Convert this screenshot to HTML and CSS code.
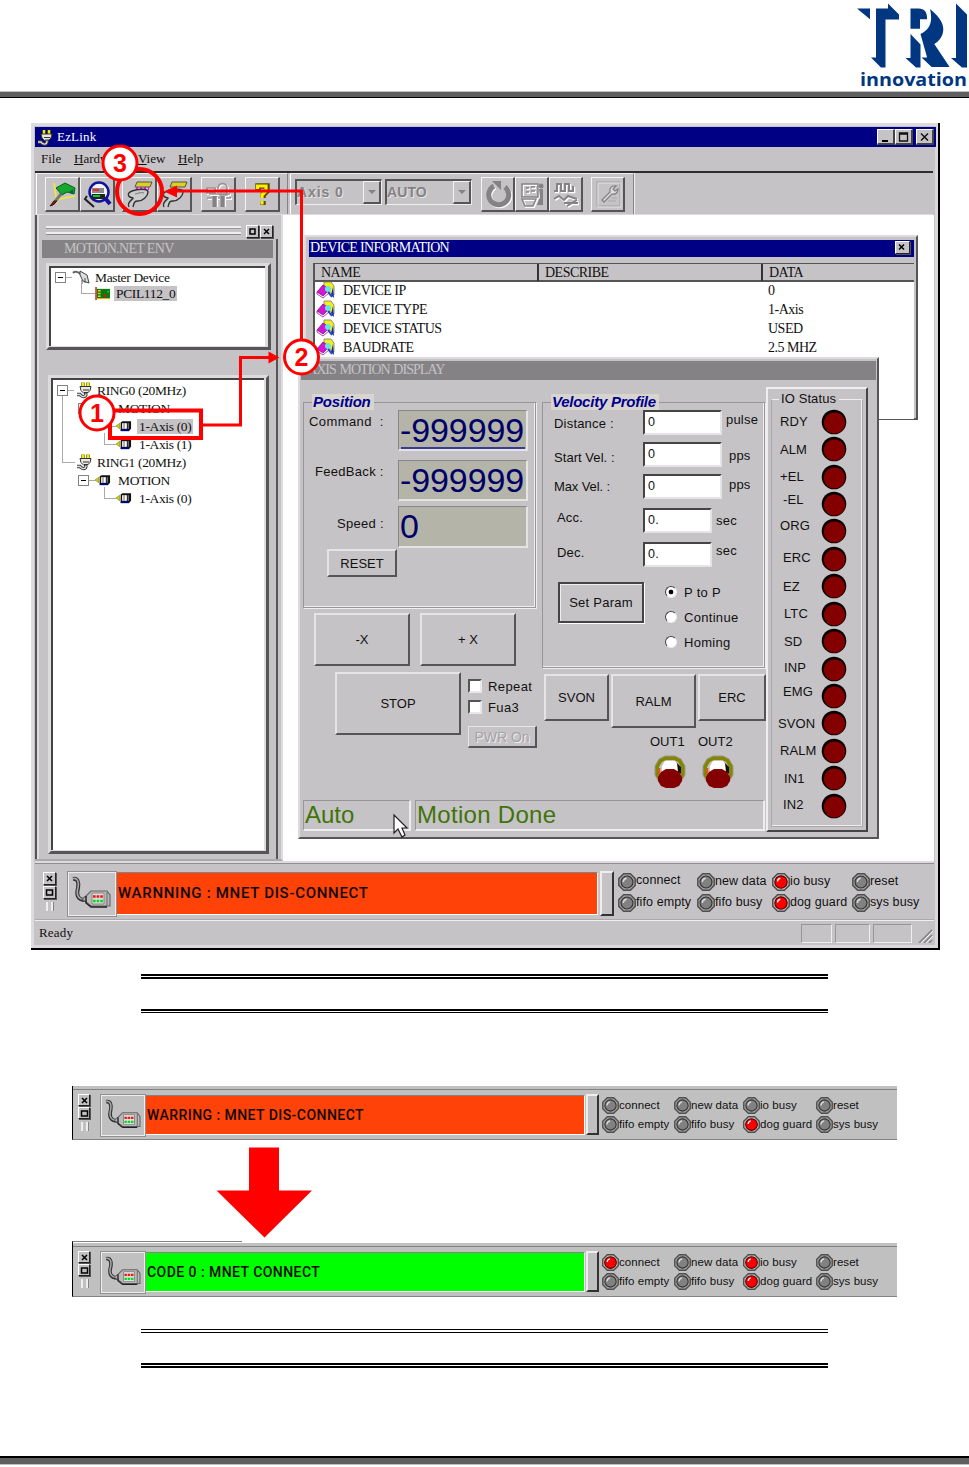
FILE: index.html
```html
<!DOCTYPE html>
<html lang="en">
<head>
<meta charset="utf-8">
<title>EzLink</title>
<link rel="stylesheet" href="styles.css">
</head>
<body>
<svg class="sprite" width="0" height="0" aria-hidden="true">
  <symbol id="plug" viewBox="0 0 17 17">
    <path d="M7 1v4M12 1v4" stroke="#6b6b00" stroke-width="3.4"/><path d="M7 1v4M12 1v4" stroke="#f4ee00" stroke-width="2"/>
    <path d="M4 5h11l-1 4-3 3H8L5 9z" fill="#e8e8e0" stroke="#333" stroke-width="1"/>
    <path d="M7 8.5h6M8 11h4" stroke="#333"/>
    <path d="M10 12c0 5-5 3-6 1H1" fill="none" stroke="#444" stroke-width="3.4"/><path d="M10 12c0 5-5 3-6 1H1" fill="none" stroke="#ddd" stroke-width="1.4"/>
  </symbol>
  <symbol id="motor" viewBox="0 0 17 12">
    <path d="M0 6l4-3v6z" fill="#d8d000" stroke="#777700" stroke-width=".6"/>
    <path d="M5 2l2-1h9v8l-2 2H5z" fill="#111"/><path d="M6.500 3h5v6h-5z" fill="#fff"/><path d="M8.500 3v6" stroke="#555"/>
    <path d="M5 10.500h9" stroke="#000084" stroke-width="2"/><path d="M13 3v6" stroke="#999"/>
  </symbol>
  <symbol id="board" viewBox="0 0 17 14">
    <path d="M1 0v14" stroke="#c01010" stroke-width="1.500"/><path d="M2 2h14v10H2z" fill="#087a10"/>
    <path d="M3 4h3M3 7h3M3 10h3" stroke="#e8d000" stroke-width="1.500"/><path d="M9 8h3v3H9z" fill="#c02020"/><path d="M13 4h2v2h-2z" fill="#20c020"/><path d="M2 12.500h14" stroke="#e8a000"/>
  </symbol>
  <symbol id="cable" viewBox="0 0 42 36">
    <path d="M2 3c5-1 6 4 5 9-2 7 0 12 7 12" fill="none" stroke="#333" stroke-width="4"/>
    <path d="M2 2.500c5-1 6 4 5 9-2 7 0 12 7 12" fill="none" stroke="#a9a9a9" stroke-width="1.600"/>
    <path d="M11 23l4-3 5-5h16l3 4v11H20l-5-4z" fill="#b9b9b9" stroke="#666" stroke-width="1.200"/>
    <path d="M15 20v7l5 4h16" fill="none" stroke="#222" stroke-width="1.500"/>
    <path d="M21 17h12v11H21z" fill="#ddd" stroke="#888"/>
    <path d="M22 20.500h10" stroke="#f01818" stroke-width="2.500" stroke-dasharray="2.700 .9"/><path d="M22 25h10" stroke="#08dc20" stroke-width="2.500" stroke-dasharray="2.700 .9"/>
    <path d="M36 16v14" stroke="#666"/>
  </symbol>
  <symbol id="led-off" viewBox="0 0 16 16">
    <path d="M5 .7h6L15.300 5v6L11 15.300H5L.7 11V5z" fill="#a2a2a2" stroke="#505050" stroke-width="1.300"/>
    <circle cx="8" cy="8" r="5.300" fill="#818181" stroke="#333"/><path d="M4.700 8a3.500 3.500 0 013-3.300" fill="none" stroke="#ddd" stroke-width="1.200"/>
  </symbol>
  <symbol id="led-on" viewBox="0 0 16 16">
    <path d="M5 .7h6L15.300 5v6L11 15.300H5L.7 11V5z" fill="#c6c6c6" stroke="#4c4c4c" stroke-width="1.300"/>
    <circle cx="8" cy="8" r="5.500" fill="#fb0000" stroke="#500"/><path d="M4.900 7.500a3 3 0 012.500-2.800" fill="none" stroke="#fff" stroke-width="1.200"/>
  </symbol>
  <symbol id="book" viewBox="0 0 18 18">
    <path d="M7 1h7l3 4v9l-5-3-5-3z" fill="#f5ee1a" stroke="#777" stroke-width=".8"/>
    <path d="M16 6l1 11-3-3z" fill="#1830a0"/>
    <path d="M0 11l6-7 6 4-6 8z" fill="#d614d6" stroke="#6d086d" stroke-width=".7"/><path d="M0 11l6 4 6-6v3l-6 5-6-4z" fill="#fff" stroke="#808" stroke-width=".7"/>
    <circle cx="11" cy="8" r="3" fill="#5fe6ea"/><path d="M11 11l4 5" stroke="#24c" stroke-width="2"/>
  </symbol>
  <symbol id="lamp" viewBox="0 0 26 26">
    <circle cx="13" cy="13" r="12.300" fill="#080000"/><circle cx="13.500" cy="14" r="10.600" fill="#840000"/>
  </symbol>
  <symbol id="switch" viewBox="0 0 32 34">
    <path d="M11 1h10l6 3 4 7v9l-4 7H5l-4-7v-9l4-7z" fill="#858500" stroke="#999" stroke-width="1"/>
    <path d="M5 12l3-5 4-2h8l4 2 3 5v9H5z" fill="#c6c3c6"/>
    <path d="M11 6h10l3 5v6H8v-6z" fill="#fff"/><path d="M23 8l4 4v7l-3-2z" fill="#111"/><path d="M5.500 13v7" stroke="#f42" stroke-width="1.500"/>
    <path d="M12 14h8l5 3 3 5v4l-3 5-5 2h-8l-5-2-3-5v-4l3-5z" fill="#840000"/>
  </symbol>
</svg>

<header class="page-head">
  <svg class="logo" width="112" height="86" viewBox="857 2 112 86">
    <g fill="#003780">
      <path d="M857 8.600h13v10.700z"/>
      <path d="M876 8.600h12V3.500l11 11v5h-13.500V67.500H881L871 57.500h5z"/>
      <path d="M910.500 8.600h8c6 0 9 4 8.500 10.600H920v9.500h-9.500z"/>
      <path d="M910.500 34l10 10.500v23H916l-10.500-9.500h5z"/>
      <path d="M930 9c7 6 13 12 13.300 20 0 7-4 12-9 15l15.300 23h-18l-10-9.500h5.500L920.500 34c8-4 13-10 9.500-25z"/>
      <path d="M956 3.500l11 11v53h-5l-11-9.500h5z"/>
    </g>
    <text class="logo-text" x="860" y="86" textLength="107" lengthAdjust="spacingAndGlyphs">innovation</text>
  </svg>
</header>

<main class="app">
  <div class="titlebar">
    <svg width="17" height="17"><use href="#plug"/></svg><span class="app-name">EzLink</span>
    <i class="cap"><svg width="15" height="14"><path d="M4 11h6" stroke="#000" stroke-width="2"/></svg></i><i class="cap"><svg width="15" height="14"><path d="M3.500 3h8v8h-8zM3.500 4h8" fill="none" stroke="#111" stroke-width="1.300"/></svg></i><i class="cap cap-close"><svg width="15" height="14"><path d="M4 3.500l7 7M11 3.500l-7 7" stroke="#111" stroke-width="1.500"/></svg></i>
  </div>
  <nav class="menu"><span class="m1">File</span><span class="m2"><u>H</u>ardware</span><span class="m3"><u>V</u>iew</span><span class="m4"><u>H</u>elp</span></nav>

  <div class="toolbar">
    <div class="tb-group tb-main">
      <button class="tool"><svg width="30" height="29" viewBox="0 0 30 29"><path d="M6 3l3 20M27 16L6 20" stroke="#f5ed25" stroke-width="1.500"/><path d="M8 8l9-5 10 5-1 6-7-2-5 3z" fill="#16a82c" stroke="#075c16"/><path d="M25 9v5l-4-2z" fill="#064"/><path d="M13 14l-8 10" stroke="#777" stroke-width="3"/><path d="M6 21l-4 5 3-1 4-4z" fill="#842020" stroke="#411"/></svg></button><button class="tool"><svg width="30" height="29" viewBox="0 0 30 29"><path d="M4 16l-2 3 9 8" fill="none" stroke="#222" stroke-width="2"/><circle cx="16" cy="12" r="9.500" fill="#f4f4f4" stroke="#11119c" stroke-width="2.500"/><path d="M9 8h12v5H9z" fill="#888"/><path d="M10 10h6" stroke="#f22" stroke-width="2"/><path d="M9 14h13v5H9z" fill="#222"/><path d="M10 16h7" stroke="#0c3" stroke-width="2"/><path d="M22 18l5 6" stroke="#11119c" stroke-width="4"/></svg></button>
      <button class="tool gap-a"><svg width="30" height="29" viewBox="0 0 30 29"><path d="M12 2h15l-2 5H10z" fill="#d8d022" stroke="#554"/><path d="M11 8.500h13" stroke="#f0f" stroke-width="3" stroke-dasharray="2 2"/><path d="M4 27c-3-5 5-8 4-9-6-1-6-5-1-7 5-2 16-3 16 1s-5 9-10 9c-4 0-4 2-5 6" fill="#ccc" stroke="#333" stroke-width="1.400"/><path d="M10 14c4-1 7-2 9-1" stroke="#777" fill="none"/></svg></button><button class="tool"><svg width="30" height="29" viewBox="0 0 30 29"><path d="M12 2h15l-2 5H10z" fill="#d8d022" stroke="#554"/><path d="M4 27c-3-5 5-8 4-9-6-1-6-5-1-7 5-2 16-3 16 1s-5 9-10 9c-4 0-4 2-5 6" fill="#ccc" stroke="#333" stroke-width="1.400"/></svg></button>
      <button class="tool gap-b"><svg width="30" height="29" viewBox="0 0 30 29"><path d="M3 8h8v5H3zM14 9c0-7 9-7 9-1v7h-8M3 18h24M5 14h21" fill="none" stroke="#fff" stroke-width="2" transform="translate(1 1)"/><path d="M3 8h8v5H3zM14 9c0-7 9-7 9-1v7h-8M3 18h24M5 14h21" fill="none" stroke="#969396" stroke-width="1.600"/><path d="M11 17v10M19 17v10" stroke="#fff" stroke-width="6"/><path d="M10.500 16v11M18.500 16v11" stroke="#848284" stroke-width="4.500"/></svg></button>
      <button class="tool gap-c"><svg width="30" height="29" viewBox="0 0 30 29"><path d="M10 10V6h9v5l-4 4v3M15 21v4" fill="none" stroke="#554f00" stroke-width="5.500"/><path d="M9.500 9V6h8.500v5l-4 4v3M14 21v3.500" fill="none" stroke="#ffee00" stroke-width="3.200"/></svg></button>
    </div>
    <div class="tb-group tb-axis">
      <div class="combo c-axis"><span>Axis 0</span><i></i></div>
      <div class="combo c-auto"><span>AUTO</span><i></i></div>
      <button class="tool t2 gap-d"><svg width="30" height="29" viewBox="0 0 30 29"><path d="M10 6a10 10 0 1011 1" fill="none" stroke="#fff" stroke-width="5" transform="translate(1 1)"/><path d="M10 6a10 10 0 1011 1" fill="none" stroke="#848284" stroke-width="5"/><path d="M8 1h9v9z" fill="#848284"/></svg></button><button class="tool t2"><svg width="30" height="29" viewBox="0 0 30 29"><path d="M4 4h16v13H4zM8 8h3M8 12h3M13 7h4M13 11h4M4 19h14l-3 7H7z" fill="none" stroke="#fff" stroke-width="2" transform="translate(1 1)"/><path d="M4 4h16v13H4zM8 8h3M8 12h3M13 7h4M13 11h4M4 19h14l-3 7H7z" fill="none" stroke="#848284" stroke-width="1.500"/><path d="M21 9h4v16h-6l3-8z" fill="#848284"/><circle cx="23" cy="6" r="2.500" fill="#848284"/></svg></button><button class="tool t2"><svg width="30" height="29" viewBox="0 0 30 29"><path d="M2 11h3V4h4v7h4V4h4v7h4V6M2 19l5-3 5 4 4-4 9 3M12 23h14M15 26l10-6" fill="none" stroke="#fff" stroke-width="2.500" transform="translate(1 1)"/><path d="M2 11h3V4h4v7h4V4h4v7h4V6M2 19l5-3 5 4 4-4 9 3M12 23h14M15 26l10-6" fill="none" stroke="#848284" stroke-width="2"/></svg></button>
      <button class="tool t2 gap-e"><svg width="30" height="29" viewBox="0 0 30 29"><path d="M3 2h23v24H3z" fill="none" stroke="#a0a0a0"/><path d="M4 3h23v24H4z" fill="none" stroke="#eee" stroke-width=".7"/><path d="M8 20l8-8c-1-4 2-7 6-6l-3 3 2 2 3-2c0 4-3 6-6 5l-8 8z" fill="#ddd" stroke="#848284" stroke-width="1.300"/><path d="M14 21h8M18 18h5" stroke="#aaa"/></svg></button>
    </div>
  </div>

  <div class="workspace">
    <aside class="side">
      <div class="grip-row"><b class="grip"></b><i class="mini"><svg width="12" height="12"><path d="M3 3h5v5H3z" fill="none" stroke="#000" stroke-width="1.500"/></svg></i><i class="mini"><svg width="12" height="12"><path d="M3 3l5 5M8 3L3 8" stroke="#000" stroke-width="1.500"/></svg></i></div>
      <div class="side-title">MOTION.NET ENV</div>
      <div class="bevel tree-top"><div class="tree">
        <div class="node"><b class="box"></b><b class="dash d1"></b><svg width="19" height="15" viewBox="0 0 19 15"><path d="M1 3c3-3 6 0 8 1" fill="none" stroke="#666" stroke-width="2"/><path d="M8 1l7 4 2 8-6-2-3-6z" fill="#ddd" stroke="#444"/><path d="M10 10v4M13 8v5" stroke="#555"/></svg><span class="tx t-master">Master Device</span></div>
        <div class="node n-board"><b class="elbow"></b><svg width="16" height="13"><use href="#board"/></svg><span class="tx sel t-pci">PCIL112_0</span></div>
      </div></div>
      <div class="bevel tree-bottom"><div class="tree">
        <div class="ring"><div class="node"><b class="box"></b><b class="dash d2"></b><svg width="17" height="18"><use href="#plug"/></svg><span class="tx t-ring">RING0 (20MHz)</span></div>
        <div class="node lv2"><b class="box"></b><b class="dash d3"></b><svg width="16" height="12"><use href="#motor"/></svg><span class="tx t-mot">MOTION</span></div>
        <div class="node lv3"><b class="elbow"></b><svg width="16" height="12"><use href="#motor"/></svg><span class="tx sel t-ax">1-Axis (0)</span></div>
        <div class="node lv3"><b class="elbow"></b><svg width="16" height="12"><use href="#motor"/></svg><span class="tx t-ax">1-Axis (1)</span></div>
        <div class="node ring1"><b class="dash d4"></b><svg width="17" height="18"><use href="#plug"/></svg><span class="tx t-ring">RING1 (20MHz)</span></div></div>
        <div class="node lv2"><b class="box"></b><b class="dash d3"></b><svg width="16" height="12"><use href="#motor"/></svg><span class="tx t-mot">MOTION</span></div>
        <div class="node lv3"><b class="elbow"></b><svg width="16" height="12"><use href="#motor"/></svg><span class="tx t-ax">1-Axis (0)</span></div>
      </div></div>
    </aside>

    <section class="mdi">
      <div class="window dev">
        <div class="win-title">DEVICE INFORMATION<i class="mini"><svg width="11" height="10"><path d="M3 2.500l5 5M8 2.500l-5 5" stroke="#000" stroke-width="1.500"/></svg></i></div>
        <div class="table">
          <div class="tr th"><span>NAME</span><span>DESCRIBE</span><span>DATA</span></div>
          <div class="tr"><svg width="20" height="18"><use href="#book"/></svg><span class="k">DEVICE IP</span><span>0</span></div>
          <div class="tr"><svg width="20" height="18"><use href="#book"/></svg><span class="k">DEVICE TYPE</span><span>1-Axis</span></div>
          <div class="tr"><svg width="20" height="18"><use href="#book"/></svg><span class="k">DEVICE STATUS</span><span>USED</span></div>
          <div class="tr"><svg width="20" height="18"><use href="#book"/></svg><span class="k">BAUDRATE</span><span>2.5 MHZ</span></div>
        </div>
      </div>

      <div class="window axis">
        <div class="axis-title">AXIS MOTION DISPLAY</div>
        <div class="axis-body">
          <div class="controls">
            <div class="cols">
              <div class="col-left">
                <fieldset class="group pos"><legend>Position</legend>
                  <div class="read r1"><label>Command&nbsp; :</label><output>-999999</output></div>
                  <div class="read r2"><label>FeedBack :</label><output>-999999</output></div>
                  <div class="read r3"><label>Speed :</label><output>0</output></div>
                  <button class="btn reset">RESET</button>
                </fieldset>
                <div class="jog"><button class="btn">-X</button><button class="btn">+ X</button></div>
                <div class="stop-row"><button class="btn stop">STOP</button>
                  <div class="checks"><label><i></i>Repeat</label><label><i></i>Fua3</label><button class="btn pwr">PWR On</button></div></div>
              </div>
              <div class="col-right">
                <fieldset class="group vel"><legend>Velocity Profile</legend>
                  <div class="vrow v1"><label>Distance :</label><b>0</b><em>pulse</em></div>
                  <div class="vrow v2"><label>Start Vel. :</label><b>0</b><em>pps</em></div>
                  <div class="vrow v3"><label>Max Vel. :</label><b>0</b><em>pps</em></div>
                  <div class="vrow v4"><label>Acc.</label><b>0.</b><em>sec</em></div>
                  <div class="vrow v5"><label>Dec.</label><b>0.</b><em>sec</em></div>
                  <div class="mode"><button class="setp">Set Param</button><div class="radios"><label><i class="on"></i>P to P</label><label><i></i>Continue</label><label><i></i>Homing</label></div></div>
                </fieldset>
                <div class="servo"><button class="btn s1">SVON</button><button class="btn s2">RALM</button><button class="btn s3">ERC</button></div>
                <div class="outs"><div>OUT1<svg width="32" height="34"><use href="#switch"/></svg></div><div>OUT2<svg width="32" height="34"><use href="#switch"/></svg></div></div>
              </div>
            </div>
            <div class="state"><div class="st1">Auto</div><div class="st2">Motion Done</div></div>
          </div>
          <div class="io"><fieldset class="io-group"><legend>IO Status</legend>
            <div class="io-row"><span>RDY</span><svg width="26" height="26"><use href="#lamp"/></svg></div>
            <div class="io-row"><span>ALM</span><svg width="26" height="26"><use href="#lamp"/></svg></div>
            <div class="io-row"><span>+EL</span><svg width="26" height="26"><use href="#lamp"/></svg></div>
            <div class="io-row up5 in2"><span>-EL</span><svg width="26" height="26"><use href="#lamp"/></svg></div>
            <div class="io-row up6"><span>ORG</span><svg width="26" height="26"><use href="#lamp"/></svg></div>
            <div class="io-row up2 in2"><span>ERC</span><svg width="26" height="26"><use href="#lamp"/></svg></div>
            <div class="io-row in2"><span>EZ</span><svg width="26" height="26"><use href="#lamp"/></svg></div>
            <div class="io-row in3"><span>LTC</span><svg width="26" height="26"><use href="#lamp"/></svg></div>
            <div class="io-row in3"><span>SD</span><svg width="26" height="26"><use href="#lamp"/></svg></div>
            <div class="io-row up2 in3"><span>INP</span><svg width="26" height="26"><use href="#lamp"/></svg></div>
            <div class="io-row up5 in2"><span>EMG</span><svg width="26" height="26"><use href="#lamp"/></svg></div>
            <div class="io-row out2"><span>SVON</span><svg width="26" height="26"><use href="#lamp"/></svg></div>
            <div class="io-row"><span>RALM</span><svg width="26" height="26"><use href="#lamp"/></svg></div>
            <div class="io-row in3"><span>IN1</span><svg width="26" height="26"><use href="#lamp"/></svg></div>
            <div class="io-row up2 in2"><span>IN2</span><svg width="26" height="26"><use href="#lamp"/></svg></div>
          </fieldset></div>
        </div>
      </div>
    </section>
  </div>

  <div class="dock dock-app">
    <div class="dock-caps"><i class="mini"><svg width="12" height="12"><path d="M3 3l5 5M8 3L3 8" stroke="#000" stroke-width="1.500"/></svg></i><i class="mini"><svg width="12" height="12"><path d="M2.500 3h6v5h-6z" fill="none" stroke="#000" stroke-width="1.500"/></svg></i><b></b></div>
    <div class="dock-icon"><svg viewBox="0 0 42 36"><use href="#cable"/></svg></div>
    <div class="message">WARNNING : MNET DIS-CONNECT</div>
    <div class="handle"></div>
    <div class="leds">
      <span class="lift"><svg><use href="#led-off"/></svg><em>connect</em></span><span><svg><use href="#led-off"/></svg><em>new data</em></span><span><svg><use href="#led-on"/></svg><em>io busy</em></span><span><svg><use href="#led-off"/></svg><em>reset</em></span>
      <span><svg><use href="#led-off"/></svg><em>fifo empty</em></span><span><svg><use href="#led-off"/></svg><em>fifo busy</em></span><span><svg><use href="#led-on"/></svg><em>dog guard</em></span><span><svg><use href="#led-off"/></svg><em>sys busy</em></span>
    </div>
  </div>
  <div class="statusbar"><span>Ready</span><i class="p1"></i><i class="p2"></i><i class="p3"></i><svg width="15" height="15"><path d="M1 15L14 2M6 15l8-8M11 15l3-3" stroke="#848284" stroke-width="1.600"/><path d="M3 15L15 3M8 15l7-7" stroke="#fff" stroke-width=".8"/></svg></div>

  <svg class="notes" width="909" height="827" viewBox="31 123 909 827">
    <g fill="none" stroke="#fe0000" stroke-width="3">
      <path d="M301.500 341V191H176"/><path d="M203 425h37.500v-67.500H270"/>
      <circle cx="139.500" cy="191.500" r="22.500" stroke-width="4"/><path d="M110 410.500h91v27.500h-91z" stroke-width="4"/>
    </g>
    <path d="M164 191.500l13-6v12zM279.500 357.500l-11-6v12z" fill="#fe0000"/>
    <g fill="#fff" stroke="#fe0000" stroke-width="3"><circle cx="120" cy="163" r="17"/><circle cx="301.500" cy="357" r="17"/><circle cx="97" cy="413" r="17"/></g>
    <g class="num"><text x="120" y="171.500">3</text><text x="301.500" y="365.500">2</text><text x="97" y="422">1</text></g>
    <path d="M394 815v18l4-4 4 8 3-2-3-7h5z" fill="#fff" stroke="#222" stroke-width="1.200"/>
  </svg>
</main>

<div class="rules rules-a"><i class="r-thick"></i><i class="r-mixed"></i></div>

<div class="dock dock-strip">
  <div class="dock-caps"><i class="mini"><svg width="12" height="12"><path d="M3 3l5 5M8 3L3 8" stroke="#000" stroke-width="1.500"/></svg></i><i class="mini"><svg width="12" height="12"><path d="M2.500 3h6v5h-6z" fill="none" stroke="#000" stroke-width="1.500"/></svg></i><b></b></div>
  <div class="dock-icon"><svg viewBox="0 0 42 36"><use href="#cable"/></svg></div>
  <div class="message">WARRING : MNET DIS-CONNECT</div>
  <div class="handle"></div>
  <div class="leds">
    <span class="lift"><svg><use href="#led-off"/></svg><em>connect</em></span><span><svg><use href="#led-off"/></svg><em>new data</em></span><span><svg><use href="#led-off"/></svg><em>io busy</em></span><span><svg><use href="#led-off"/></svg><em>reset</em></span>
    <span><svg><use href="#led-off"/></svg><em>fifo empty</em></span><span><svg><use href="#led-off"/></svg><em>fifo busy</em></span><span><svg><use href="#led-on"/></svg><em>dog guard</em></span><span><svg><use href="#led-off"/></svg><em>sys busy</em></span>
  </div>
</div>
<svg class="arrow" width="96" height="91" viewBox="0 0 96 91"><path d="M33 .5h30v43h33L48.500 90.500.5 43.500H33z" fill="#fe0000"/></svg>
<div class="overline"></div>
<div class="dock dock-strip dock-ok">
  <div class="dock-caps"><i class="mini"><svg width="12" height="12"><path d="M3 3l5 5M8 3L3 8" stroke="#000" stroke-width="1.500"/></svg></i><i class="mini"><svg width="12" height="12"><path d="M2.500 3h6v5h-6z" fill="none" stroke="#000" stroke-width="1.500"/></svg></i><b></b></div>
  <div class="dock-icon"><svg viewBox="0 0 42 36"><use href="#cable"/></svg></div>
  <div class="message">CODE 0 : MNET CONNECT</div>
  <div class="handle"></div>
  <div class="leds">
    <span class="lift"><svg><use href="#led-on"/></svg><em>connect</em></span><span><svg><use href="#led-off"/></svg><em>new data</em></span><span><svg><use href="#led-on"/></svg><em>io busy</em></span><span><svg><use href="#led-off"/></svg><em>reset</em></span>
    <span><svg><use href="#led-off"/></svg><em>fifo empty</em></span><span><svg><use href="#led-off"/></svg><em>fifo busy</em></span><span><svg><use href="#led-on"/></svg><em>dog guard</em></span><span><svg><use href="#led-off"/></svg><em>sys busy</em></span>
  </div>
</div>

<div class="rules rules-b"><i class="r-thin"></i><i class="r-thick"></i></div>
<footer class="page-foot"></footer>
</body>
</html>
```

FILE: styles.css
```css
* { box-sizing: border-box; }
body { margin: 0; width: 969px; height: 1467px; background: #fff; color: #111; font-family: "Liberation Sans", sans-serif; overflow: hidden; display: flex; flex-direction: column; align-items: flex-start; }
body > * { flex: none; }
svg { display: block; flex: none; }
i, em, b { font-style: normal; font-weight: normal; }
button { font: inherit; color: inherit; padding: 0; margin: 0; border: 0; background: #c6c3c6; display: block; flex: none; }
.sprite { position: absolute; }

.page-head { width: 969px; height: 98px; padding: 2px 0 0 857px; border-bottom: 1px solid #000; background: linear-gradient(#c0c0c0 0 1px, #606060 1px) 0 100% / 100% 6px no-repeat; }
.logo-text { font: 700 18px "Open Sans", sans-serif; fill: #003780; }

/* application window */
.app { position: relative; width: 909px; height: 827px; margin: 25px 0 0 31px; padding: 4px 5px 5px 4px; background: #c6c3c6; border-right: 2px solid #000; border-bottom: 2px solid #000; box-shadow: inset 3px 3px #dedbde, inset -3px -3px #dad8da; }
.titlebar { display: flex; align-items: center; height: 20px; width: 901px; padding: 0 2px 0 2px; background: #000084; color: #fff; }
.app-name { flex: 1; margin-left: 3px; font: 13px "Liberation Serif", serif; letter-spacing: .2px; }
.cap { width: 18px; height: 16px; background: #c6c3c6; border: 1px solid #fff; border-right: 2px solid #444; border-bottom: 2px solid #444; }
.cap-close { margin-left: 3px; }
.menu { display: grid; grid-template-columns: 33px 64px 40px auto; height: 24px; padding-left: 6px; font: 13px/23px "Liberation Serif", serif; }
.toolbar { display: flex; height: 44px; width: 898px; border-top: 2px solid #2c2c2c; border-bottom: 1px solid #dedbde; background: #c6c3c6; }
.tb-group { display: flex; border-left: 1px solid #fff; border-top: 1px solid #eee; }
.tb-main { width: 252px; padding: 3px 0 0 8px; margin-left: 1px; border-right: 1px solid #848284; }
.tb-axis { width: 344px; padding: 3px 0 0 4px; margin-left: 2px; border-right: 1px solid #848284; box-shadow: 1px 0 #eee; }
.tool { width: 35px; height: 35px; padding: 2px; border: 1px solid #f4f4f4; border-right: 2px solid #555; border-bottom: 2px solid #555; overflow: hidden; }
.t2 { width: 34px; }
.gap-a { margin-left: 7px; } .gap-b { margin-left: 9px; } .gap-c { margin-left: 9px; } .gap-d { margin-left: 9px; } .gap-e { margin-left: 8px; }
.combo { display: flex; height: 26px; width: 87px; margin-top: 2px; border: 1px solid #eee; border-top: 2px solid #555; border-left: 2px solid #555; color: #848284; font: 700 14px/23px "Liberation Sans", sans-serif; letter-spacing: .9px; text-shadow: 1px 1px #e6e6e6; }
.c-auto { margin-left: 3px; letter-spacing: .1px; }
.combo span { flex: 1; }
.combo i { display: flex; align-items: center; justify-content: center; width: 18px; border: 1px solid #f4f4f4; border-right: 2px solid #555; border-bottom: 2px solid #555; }
.combo i::after { content: ""; border: 4px solid transparent; border-top-color: #848284; border-bottom: 0; }
.workspace { display: flex; height: 646px; width: 899px; background: #fff; }

/* left panel */
.side { width: 248px; height: 646px; padding: 10px 5px 0 6px; background: linear-gradient(#555 0 0) 241px 24px / 2px 100% no-repeat, linear-gradient(90deg, #555 0 2px, #dedbde 2px 4px, #c6c3c6 4px); border-right: 2px solid #dedbde; border-bottom: 2px solid #aaa; }
.grip-row { display: flex; height: 14px; margin-bottom: 1px; }
.grip { width: 195px; height: 8px; margin: 1px 5px 0 5px; border: 1px solid #eee; border-width: 2px 0; box-shadow: 0 1px #888, inset 0 1px #999; }
.mini { width: 13px; height: 13px; margin-right: 1px; background: #c6c3c6; border: 1px solid #fff; border-right-color: #222; border-bottom-color: #222; box-shadow: 1px 1px #555; overflow: hidden; }
.side-title { height: 18px; margin: 0 3px 0 1px; padding-left: 22px; background: #848284; color: #c6c3c6; font: 14px/17px "Liberation Serif", serif; letter-spacing: -.65px; }
.bevel { width: 225px; border: 3px solid #dedbde; border-right: 3px solid #555; border-bottom: 3px solid #555; margin-left: 5px; background: #dedbde; padding: 0 2px 1px 0; }
.tree { height: 100%; border-top: 2px solid #444; border-left: 2px solid #444; background: #fff; }
.tree-top { height: 87px; margin-top: 5px; padding-right: 3px; }
.tree-top .tree { padding-top: 1px; }
.tree-bottom { height: 479px; margin: 25px 0 0 7px; width: 221px; }
.tree-bottom .tree { padding-top: 1px; }
.node { display: flex; align-items: center; font: 13.500px/15px "Liberation Serif", serif; letter-spacing: -.35px; }
.tree-top .node { height: 16px; padding-left: 4px; }
.tree-top .n-board { padding-left: 30px; }
.box { width: 11px; height: 11px; border: 1px solid #848284; background: linear-gradient(#000 0 0) center / 5px 1px no-repeat; flex: none; }
.dash { height: 1px; background: #aaa; flex: none; }
.d1 { width: 6px; } .d2 { width: 6px; margin-right: 2px; } .d3 { width: 6px; } .d4 { width: 13px; margin-right: 1px; }
.elbow { width: 14px; height: 12px; margin-top: -10px; border-left: 1px solid #aaa; border-bottom: 1px solid #aaa; flex: none; }
.tx { padding: 0 2px; margin-left: 2px; white-space: pre; }
.n-board .tx { margin-left: 3px; }
.sel { background: #c6c3c6; }
.t-ax { margin-left: 5px; }
.t-mot { margin-left: 5px; }
.tree-bottom .node { height: 18px; padding-left: 4px; }
.tree-bottom .lv2 { padding-left: 25px; }
.tree-bottom .lv3 { padding-left: 51px; }
.tree-bottom .lv3 .elbow { width: 12px; }
.ring { background: linear-gradient(#aaa 0 0) 9px 15px / 1px 66px no-repeat; }
.tree-bottom .ring1 { padding-left: 9px; }

/* child windows */
.mdi { position: relative; flex: 1; }
.window { position: absolute; background: #c6c3c6; border: 2px solid #dedbde; border-right: 2px solid #555; border-bottom: 2px solid #555; }
.dev { left: 21px; top: 20px; width: 614px; height: 185px; padding: 3px 2px 2px 3px; font: 14px/18px "Liberation Serif", serif; }
.win-title { display: flex; justify-content: space-between; height: 17px; padding: 1px 3px 0 1px; background: #000084; color: #fff; line-height: 14px; letter-spacing: -.68px; }
.win-title .mini { width: 15px; }
.table { height: 156px; margin: 6px 0 0 4px; background: #fff; border-top: 1px solid #555; border-left: 2px solid #555; letter-spacing: -.5px; }
.tr { display: grid; grid-template-columns: 28px 425px auto; height: 19px; line-height: 17px; }
.tr > svg { margin: -1px 0 0 1px; }
.th { grid-template-columns: 224px 224px auto; height: 18px; line-height: 17px; background: #c6c3c6; border-bottom: 2px solid #555; }
.th span { padding-left: 6px; border-right: 2px solid #333; letter-spacing: -.5px; }
.th span:last-child { border: 0; }
.axis { left: 15px; top: 142px; width: 581px; height: 482px; padding: 2px 1px; }
.axis-title { height: 19px; padding-left: 6px; background: #848284; color: #c6c3c6; font: 14px/18px "Liberation Serif", serif; letter-spacing: -.95px; word-spacing: 1px; }
.axis-body { display: flex; height: 455px; font-size: 13px; letter-spacing: .4px; }
.controls { width: 465px; padding: 14px 0 0 2px; }
.cols { display: flex; height: 406px; }
.col-left { width: 239px; }
.col-right { width: 224px; }
fieldset { margin: 0; min-width: 0; padding: 0; }
.group { border: 1px solid #989598; box-shadow: 1px 1px #eee, inset -1px -1px #eee; }
.pos { width: 233px; height: 214px; display: flow-root; }
.group legend { height: 16px; margin-left: 8px; padding: 0 3px 0 1px; background: #d8d5ce; color: #00008c; font: italic 700 15px/16px "Liberation Sans", sans-serif; letter-spacing: -.2px; }
.read { display: flex; height: 41px; }
.read label { width: 94px; flex: none; white-space: pre; padding-top: 4px; }
.read output { width: 130px; background: #b4b5a8; color: #000069; font-size: 34px; line-height: 38px; letter-spacing: -.1px; padding-left: 1px; border: 1px solid #888; border-right: 2px solid #e4e4e4; border-bottom: 2px solid #e4e4e4; overflow: hidden; }
.r1 { padding-left: 5px; } .r1 label { width: 89px; }
.r1 output { background: linear-gradient(#3a3a98 0 0) 2px 100% / 124px 2px no-repeat #b4b5a8; }
.r2 { margin-top: 9px; padding-left: 11px; } .r2 label { width: 83px; letter-spacing: .3px; }
.r3 { margin-top: 5px; height: 42px; padding-left: 33px; } .r3 label { width: 61px; padding-top: 10px; letter-spacing: .3px; }
.btn { border: 2px solid #e6e4e6; border-right: 2px solid #555; border-bottom: 2px solid #555; text-align: center; }
.reset { width: 70px; height: 28px; margin: 1px 0 0 23px; }
.jog { display: flex; gap: 10px; margin: 5px 0 0 11px; }
.jog .btn { width: 96px; height: 53px; }
.stop-row { display: flex; margin: 6px 0 0 32px; }
.stop { width: 126px; height: 63px; letter-spacing: 0; }
.checks { margin-left: 7px; padding-top: 6px; }
.checks label { display: flex; align-items: center; height: 16px; margin-bottom: 5px; }
.checks i { width: 14px; height: 14px; margin-right: 6px; background: #fff; border: 2px solid #555; border-right-color: #e8e8e8; border-bottom-color: #e8e8e8; }
.pwr { width: 69px; height: 22px; margin-top: 11px; color: #a5a2a5; text-shadow: 1px 1px #eee; border-width: 1px 2px 2px 1px; font-size: 14px; letter-spacing: 0; }
.vel { width: 223px; height: 274px; padding-left: 11px; display: flow-root; }
.group.vel legend { margin-left: -3px; letter-spacing: -.25px; }
.vrow { display: grid; grid-template-columns: 89px 79px auto; height: 25px; letter-spacing: .2px; }
.vrow b { background: #fff; border: 2px solid #444; border-right: 2px solid #e4e4e4; border-bottom: 2px solid #e4e4e4; padding-left: 3px; line-height: 20px; font-size: 12.500px; }
.vrow label { padding-top: 6px; } .vrow em { padding: 2px 0 0 5px; }
.vrow.v1 em { padding: 2px 0 0 4px; }
.v2 { margin-top: 7px; } .v3 { margin-top: 7px; } .v4 { margin-top: 9px; } .v5 { margin-top: 9px; }
.v2 label { padding-top: 8px; letter-spacing: .05px; } .v3 label { padding-top: 5px; letter-spacing: -.1px; } .v2 em { padding: 6px 0 0 7px; } .v3 em { padding: 3px 0 0 7px; }
.v4, .v5 { grid-template-columns: 89px 69px auto; }
.v4 label { padding: 2px 0 0 3px; } .v5 label { padding: 3px 0 0 3px; }
.v4 em { padding: 5px 0 0 4px; } .v5 em { padding: 1px 0 0 4px; }
.mode { display: flex; margin: 15px 0 0 4px; }
.setp { width: 86px; height: 41px; border: 2px solid #444; box-shadow: 1px 1px #fff, inset 1px 1px #eee; letter-spacing: .25px; }
.radios { margin-left: 21px; padding-top: 1px; }
.radios label { display: flex; align-items: center; height: 18px; margin-bottom: 7px; white-space: pre; letter-spacing: .3px; }
.radios i { width: 12px; height: 12px; margin-right: 7px; border-radius: 50%; background: #fff; border: 1.500px solid #444; border-right-color: #eee; border-bottom-color: #eee; flex: none; }
.radios .on { background: radial-gradient(#000 0 2px, #fff 2.700px); }
.servo { display: flex; align-items: flex-start; margin: 6px 0 0 2px; gap: 2px; letter-spacing: 0; }
.s1 { width: 65px; height: 47px; } .s2 { width: 85px; height: 54px; } .s3 { width: 68px; height: 47px; }
.outs { display: flex; margin: 6px 0 0 108px; gap: 12px; letter-spacing: 0; }
.outs div { width: 36px; } .outs svg { margin: 6px 0 0 4px; }
.state { display: flex; gap: 4px; height: 31px; color: #3f7408; font-size: 24px; line-height: 28px; letter-spacing: 0; }
.st1, .st2 { border: 1px solid #989598; border-right: 2px solid #eee; border-bottom: 2px solid #eee; padding-left: 1px; }
.st1 { width: 108px; } .st2 { width: 350px; letter-spacing: .3px; }
.io { width: 102px; height: 445px; margin-top: 7px; margin-left: 0; padding: 3px; border: 2px solid #eee; border-right: 2px solid #444; border-bottom: 2px solid #444; }
.io-group { display: flex; flex-direction: column; height: 435px; margin: 0; padding: 0; border: 1px solid #aaa; box-shadow: inset -1px -1px #eee; border-top-color: #eee; }
.io-group legend { margin-left: 7px; padding: 0 3px 0 2px; letter-spacing: .1px; height: 15px; line-height: 13px; }
.io-row { display: flex; align-items: center; justify-content: space-between; height: 27.430px; padding: 2px 15px 0 8px; letter-spacing: .1px; flex: none; }
.up2 span { margin-bottom: 3px; } .up5 span { margin-bottom: 9px; } .up6 span { margin-bottom: 11px; }
.in2 { padding-left: 11px; } .in3 { padding-left: 12px; } .out2 { padding-left: 6px; }

/* connection dock */
.dock { display: flex; align-items: flex-start; }
.dock-caps { flex: none; margin-top: -1px; }
.dock-caps .mini { display: block; margin: 0 0 1px; }
.dock-caps b { display: block; width: 7px; height: 9px; margin: 3px 0 0 3px; border-left: 2px solid #eee; border-right: 2px solid #eee; box-shadow: 1px 0 #848284; }
.dock-icon { flex: none; background: inherit; border: 1px solid #909090; box-shadow: inset 1px 1px #eee, inset -1px -1px #eee; }
.message { flex: none; color: #100800; font-family: Roboto, sans-serif; font-weight: 500; background: #ff4208; border-top: 1px solid #848284; border-bottom: 1px solid #fff; border-right: 1px solid #fff; white-space: pre; }
.handle { flex: none; border: 2px solid #eee; border-right: 2px solid #333; border-bottom: 2px solid #333; }
.leds { display: grid; }
.leds span { display: flex; align-items: center; white-space: pre; }
.leds em { margin-top: -1px; }
.leds .lift em { margin-top: -4px; }
.dock-app { height: 59px; width: 899px; padding: 10px 0 0 8px; border-top: 2px solid #dedbde; border-bottom: 1px solid #aaa; box-shadow: inset 0 1px #908e90; }
.dock-app .dock-caps { width: 24px; }
.dock-app .dock-icon { width: 50px; height: 46px; margin-top: -2px; padding: 4px 3px; }
.dock-app .dock-icon svg { width: 42px; height: 36px; }
.dock-app .message { width: 481px; height: 43px; padding-left: 1px; margin-top: -1px; font-size: 15px; line-height: 41px; letter-spacing: .7px; }
.dock-app .handle { width: 14px; height: 45px; margin: -2px 0 0 2px; }
.dock-app .leds { grid-template-columns: 79px 75px 80px 70px; grid-auto-rows: 21px; margin: -2px 0 0 4px; font-size: 12.500px; letter-spacing: .1px; }
.dock-app .leds svg { width: 18px; height: 18px; }
.statusbar { display: flex; align-items: center; height: 25px; width: 899px; padding: 0 0 0 4px; border-top: 1px solid #eee; font: 13px "Liberation Serif", serif; }
.statusbar span { flex: 1; letter-spacing: .2px; }
.statusbar i { height: 19px; border: 1px solid #989598; border-right-color: #eee; border-bottom-color: #eee; margin-right: 3px; }
.p1 { width: 31px; } .p2 { width: 35px; } .p3 { width: 39px; }
.statusbar svg { margin: 4px 1px 0 3px; }
.notes { position: absolute; left: 0; top: 0; }
.num { font: 700 25px "Liberation Sans", sans-serif; fill: #fe0000; text-anchor: middle; }

/* strips under the window */
.rules { display: flex; flex-direction: column; justify-content: space-between; width: 687px; height: 39px; margin-left: 141px; }
.rules-a { margin-top: 24px; }
.rules-b { margin-top: 32px; }
.r-thick { height: 5px; background: linear-gradient(#000 0 2px, #fff 2px 3px, #000 3px); }
.r-mixed { height: 4px; background: linear-gradient(#000 0 2px, #fff 2px 3px, #000 3px); }
.r-thin { height: 4px; background: linear-gradient(#000 0 1px, #fff 1px 3px, #000 3px); }
.dock-strip { width: 825px; height: 54px; margin: 73px 0 0 72px; padding: 8px 0 0 5px; background: #c0c0c0; border-left: 1px solid #000; border-bottom: 1px solid #848284; box-shadow: inset 0 3px #c0c0c0, inset 0 4px #848284; }
.dock-strip .dock-caps { width: 22px; margin-top: 0; }
.dock-strip .mini { width: 12px; height: 12px; background: #c0c0c0; }
.dock-strip .dock-icon { width: 46px; height: 43px; padding: 4px 3px; }
.dock-strip .dock-icon svg { width: 39px; height: 33px; }
.dock-strip .message { width: 439px; height: 40px; margin-top: 1px; padding-left: 1px; font-size: 14px; line-height: 38px; letter-spacing: .45px; }
.dock-strip .handle { width: 13px; height: 41px; margin: 0 0 0 1px; }
.dock-strip .leds { grid-template-columns: 72px 69px 73px 70px; grid-auto-rows: 19px; margin: 2px 0 0 3px; font-size: 11.500px; letter-spacing: .05px; }
.dock-strip .leds svg { width: 17px; height: 17px; }
.dock-strip .leds em { margin-top: -2px; }
.dock-strip.dock-ok { margin-top: 0; }
.dock-ok .message { background: #00ff00; }
.arrow { margin: 7px 0 0 216px; }
.overline { width: 170px; height: 2px; margin: 3px 0 0 72px; border-top: 1px solid #808080; border-left: 1px solid #000; }
.page-foot { width: 969px; height: 10px; margin-top: 88px; background: linear-gradient(#000 0 2px, #606060 2px 8px, #c0c0c0 8px 9px, #fff 9px); }
```
